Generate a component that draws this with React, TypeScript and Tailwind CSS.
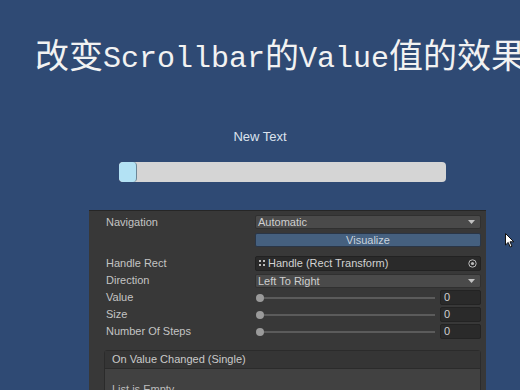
import React from "react";

const labelCls = "w-[149px] shrink-0 text-[11px] leading-[15px] text-[#c4c4c4]";

function Arrow() {
  return (
    <svg width="7" height="4" viewBox="0 0 7 4" className="shrink-0">
      <path d="M0 0 H7 L3.5 4 Z" fill="#c2c2c2" />
    </svg>
  );
}

function Dropdown({ text }: { text: string }) {
  return (
    <div className="flex flex-1 items-center justify-between rounded-[2px] border border-[#303030] bg-[#4a4a4a] pl-[2px] pr-[5px] text-[11px] leading-[12px] text-[#cfcfcf]">
      <span>{text}</span>
      <Arrow />
    </div>
  );
}

function SliderRow({ label }: { label: string }) {
  return (
    <div className="flex h-[15px] items-center">
      <div className={labelCls}>{label}</div>
      <div className="flex flex-1 items-center">
        <div className="relative flex h-[15px] flex-1 items-center pl-[4px] pr-[5px]">
          <div className="h-[2px] w-full bg-[#5b5b5b]" />
          <div className="absolute left-[1px] h-[8px] w-[8px] rounded-full bg-[#9a9a9a]" />
        </div>
        <div className="h-[15px] w-[41px] rounded-[2px] border border-[#232323] bg-[#2a2a2a] pl-[3px] text-[11px] leading-[13px] text-[#d0d0d0]">
          0
        </div>
      </div>
    </div>
  );
}

export default function App() {
  const cjk = "text-[34px]";
  return (
    <div
      className="relative flex h-[390px] w-[520px] flex-col overflow-hidden bg-[#2f4a74]"
      style={{ fontFamily: '"Liberation Sans", Arial, sans-serif' }}
    >
      {/* title */}
      <div
        className="mt-[42px] flex h-[34px] shrink-0 items-end whitespace-nowrap pl-[35px] text-[30px] leading-[34px] text-[#f2f2f2]"
        style={{ fontFamily: '"Liberation Mono", "Noto Sans CJK SC", monospace' }}
      >
        <span className={cjk}>改变</span>
        <span>Scrollbar</span>
        <span className={cjk}>的</span>
        <span>Value</span>
        <span className={cjk}>值的效果</span>
      </div>

      <div className="mt-[53px] shrink-0 text-center text-[13px] leading-[15px] text-[#dbe3ee]">New Text</div>

      {/* scrollbar */}
      <div className="ml-[119px] mt-[18px] flex h-[20px] w-[327px] shrink-0 overflow-hidden rounded-[4px] bg-[#d5d5d5]">
        <div className="h-full w-[18px] rounded-[4px] border-r border-[#6c8696] bg-[#b3e2f4]" />
      </div>

      {/* inspector */}
      <div className="ml-[89px] mt-[28px] w-[397px] shrink-0 border-t border-[#262626] bg-[#383838] pb-[20px] pl-[17px] pr-[5px] pt-[4px]">
        <div className="flex h-[14px] items-center">
          <div className={labelCls}>Navigation</div>
          <div className="flex h-[14px] flex-1">
            <Dropdown text="Automatic" />
          </div>
        </div>
        <div className="mt-[4px] flex h-[14px]">
          <div className="w-[149px] shrink-0" />
          <div className="flex-1 rounded-[2px] border border-[#2a3647] bg-[#45607f] text-center text-[11px] leading-[12px] text-[#c9d3de]">
            Visualize
          </div>
        </div>

        <div className="mt-[9px] flex flex-col gap-[2px]">
          <div className="flex h-[15px] items-center">
            <div className={labelCls}>Handle Rect</div>
            <div className="flex h-[15px] flex-1 items-center justify-between rounded-[2px] border border-[#222] bg-[#2a2a2a] pl-[3px] pr-[3px] text-[11px] text-[#d2d2d2]">
              <div className="flex items-center gap-[2px]">
                <svg width="7" height="7" viewBox="0 0 7 7">
                  <rect x="0" y="0" width="2" height="2" fill="#bdbdbd" />
                  <rect x="4" y="0" width="2" height="2" fill="#bdbdbd" />
                  <rect x="0" y="4" width="2" height="2" fill="#bdbdbd" />
                  <rect x="4" y="4" width="2" height="2" fill="#bdbdbd" />
                </svg>
                <span className="leading-[13px]">Handle (Rect Transform)</span>
              </div>
              <svg width="9" height="9" viewBox="0 0 9 9">
                <circle cx="4.5" cy="4.5" r="3.7" fill="none" stroke="#bdbdbd" strokeWidth="1" />
                <circle cx="4.5" cy="4.5" r="1.6" fill="#bdbdbd" />
              </svg>
            </div>
          </div>
          <div className="flex h-[15px] items-center">
            <div className={labelCls}>Direction</div>
            <div className="flex h-[14px] flex-1">
              <Dropdown text="Left To Right" />
            </div>
          </div>
          <SliderRow label="Value" />
          <SliderRow label="Size" />
          <SliderRow label="Number Of Steps" />
        </div>

        {/* event box */}
        <div className="ml-[-2px] mt-[11px] flex flex-col rounded-[3px] border border-[#2b2b2b]">
          <div className="h-[18px] border-b border-[#2b2b2b] bg-[#353535] pl-[7px] text-[11px] leading-[17px] text-[#cacaca]">
            On Value Changed (Single)
          </div>
          <div className="h-[40px] bg-[#414141] pl-[7px] pt-[14px] text-[11px] leading-[13px] text-[#bdbdbd]">
            List is Empty
          </div>
        </div>
      </div>

      {/* mouse cursor */}
      <svg className="absolute left-[505px] top-[233px]" width="10" height="15" viewBox="0 0 10 15">
        <path d="M0.5 0.5 V12 L3.2 9.4 L5.2 14 L7 13.2 L5 8.8 H8.8 Z" fill="#ffffff" stroke="#111" strokeWidth="1" />
      </svg>
    </div>
  );
}
